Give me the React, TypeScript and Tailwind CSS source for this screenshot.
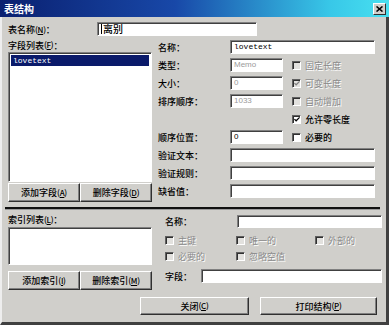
import type { ReactNode } from 'react'

const face = 'bg-[#d0cfcb]'
const dim = 'text-[#8a8a8a] [text-shadow:1px_1px_0_#ffffff]'

function Key({ k }: { k: string }) {
  return (
    <span className="text-[8px] tracking-[-0.3px]">
      (<span className="underline">{k}</span>)
    </span>
  )
}

function Sunken({ className = '', children }: { className?: string; children?: ReactNode }) {
  return (
    <div
      className={`border border-t-[#808080] border-l-[#808080] border-b-white border-r-white shadow-[inset_1px_1px_0_#404040] ${className}`}
    >
      {children}
    </div>
  )
}

function Field({ w, value, grey, mono, cjk }: { w: string; value?: string; grey?: boolean; mono?: boolean; cjk?: boolean }) {
  const font = cjk
    ? 'text-[10px]'
    : mono
      ? "font-['Liberation_Mono',monospace] text-[8px]"
      : "font-['Liberation_Sans',sans-serif] text-[8px]"
  return (
    <Sunken className={`${w} h-full bg-white flex items-center pl-[3px]`}>
      {cjk && <span className="w-px h-[10px] bg-black mr-px" />}
      <span className={`${font} ${grey ? 'text-[#9a9a9a] font-normal' : 'text-black'}`}>{value}</span>
    </Sunken>
  )
}

function Btn({ className = '', children }: { className?: string; children: ReactNode }) {
  return (
    <div
      className={`flex items-center justify-center ${face} border border-t-white border-l-white border-b-[#303030] border-r-[#303030] shadow-[inset_-1px_-1px_0_#808080] ${className}`}
    >
      {children}
    </div>
  )
}

function Check({ label, checked, disabled }: { label: string; checked?: boolean; disabled?: boolean }) {
  return (
    <div className="flex items-center gap-[4px]">
      <span
        className={`w-[9px] h-[9px] flex items-center justify-center border border-t-[#606060] border-l-[#606060] border-b-white border-r-white shadow-[inset_1px_1px_0_#303030] ${disabled ? 'bg-[#e2e1de]' : 'bg-white'}`}
      >
        {checked && (
          <svg width="7" height="7" viewBox="0 0 7 7" className="ml-[1px] mt-[1px]">
            <path d="M0.5 3 L2.5 5 L6.5 1" fill="none" stroke={disabled ? '#808080' : '#000'} strokeWidth="1.4" />
          </svg>
        )}
      </span>
      <span className={disabled ? `${dim} font-normal` : ''}>{label}</span>
    </div>
  )
}

function Row({ label, children }: { label: ReactNode; children: ReactNode }) {
  return (
    <div className="flex items-center h-[14px]">
      <span className="w-[72px] shrink-0">{label}</span>
      {children}
    </div>
  )
}

export default function App() {
  return (
    <div className={`w-[389px] h-[325px] ${face} flex flex-col overflow-hidden font-['Noto_Sans_CJK_SC','Noto_Sans',sans-serif] text-[9px] font-medium leading-none text-black`}>
      {/* title bar */}
      <div className="h-[17px] shrink-0 flex items-center justify-between pl-[4px] pr-[3px] bg-[linear-gradient(90deg,#0a2070_0%,#1848a8_45%,#38c8e8_85%,#48e0f0_100%)]">
        <span className="text-white font-bold text-[10px]">表结构</span>
        <div className="w-[13px] h-[12px] flex items-center justify-center bg-[#d0cfcb] border border-t-white border-l-white border-b-[#303030] border-r-[#303030]">
          <svg width="7" height="6" viewBox="0 0 7 6">
            <path d="M0.5 0.5 L6.5 5.5 M6.5 0.5 L0.5 5.5" stroke="#000" strokeWidth="1.6" />
          </svg>
        </div>
      </div>

      {/* body */}
      <div className="flex-1 flex flex-col pl-[6px] pr-[4px] pt-[5px] border-l-2 border-l-[#eeeeee] border-r-[3px] border-r-[#404040] border-b-[3px] border-b-[#404040]">
        <div className="flex items-center h-[14px]">
          <span className="w-[89px]">
            表名称<Key k="N" />：
          </span>
          <Field w="w-[160px]" value="离别" cjk />
        </div>

        {/* field section */}
        <div className="flex mt-[2px]">
          <div className="w-[144px] flex flex-col">
            <div className="h-[14px] flex items-center">
              字段列表<Key k="F" />：
            </div>
            <Sunken className="h-[130px] bg-white p-[2px]">
              <div className="h-[11px] bg-[#0a1a6a] text-white flex items-center pl-[2px] font-['Liberation_Mono',monospace] text-[8px]">
                lovetext
              </div>
            </Sunken>
            <div className="flex mt-[1px] h-[19px]">
              <Btn className="w-[72px]">
                添加字段<Key k="A" />
              </Btn>
              <Btn className="w-[72px]">
                删除字段<Key k="D" />
              </Btn>
            </div>
          </div>

          <div className="ml-[6px] mt-[2px] flex flex-col gap-[4px]">
            <Row label="名称：">
              <Field w="w-[145px]" value="lovetext" mono />
            </Row>
            <Row label="类型：">
              <Field w="w-[53px]" value="Memo" grey />
              <div className="ml-[9px]">
                <Check label="固定长度" disabled />
              </div>
            </Row>
            <Row label="大小：">
              <Field w="w-[53px]" value="0" grey />
              <div className="ml-[9px]">
                <Check label="可变长度" checked disabled />
              </div>
            </Row>
            <Row label="排序顺序：">
              <Field w="w-[53px]" value="1033" grey />
              <div className="ml-[9px]">
                <Check label="自动增加" disabled />
              </div>
            </Row>
            <Row label="">
              <div className="ml-[62px]">
                <Check label="允许零长度" checked />
              </div>
            </Row>
            <Row label="顺序位置：">
              <Field w="w-[53px]" value="0" />
              <div className="ml-[9px]">
                <Check label="必要的" />
              </div>
            </Row>
            <Row label="验证文本：">
              <Field w="w-[145px]" />
            </Row>
            <Row label="验证规则：">
              <Field w="w-[145px]" />
            </Row>
            <Row label="缺省值：">
              <Field w="w-[145px]" />
            </Row>
          </div>
        </div>

        {/* divider */}
        <div className="mt-[5px] -ml-[3px] mr-[2px] h-[2px] bg-[#101010] shadow-[0_1px_0_#9a9a9a]" />

        {/* index section */}
        <div className="flex mt-[3px]">
          <div className="w-[144px] flex flex-col">
            <div className="h-[15px] flex items-center">
              索引列表<Key k="L" />：
            </div>
            <Sunken className="h-[38px] bg-white" />
            <div className="flex mt-[6px] h-[19px]">
              <Btn className="w-[72px]">
                添加索引<Key k="I" />
              </Btn>
              <Btn className="w-[72px]">
                删除索引<Key k="M" />
              </Btn>
            </div>
          </div>

          <div className="ml-[13px] flex flex-col">
            <div className="flex items-center h-[13px] mt-[3px]">
              <span className="w-[72px]">名称：</span>
              <Field w="w-[145px]" />
            </div>
            <div className="flex items-center h-[12px] mt-[6px]">
              <div className="w-[71px]">
                <Check label="主键" disabled />
              </div>
              <div className="w-[79px]">
                <Check label="唯一的" disabled />
              </div>
              <Check label="外部的" disabled />
            </div>
            <div className="flex items-center h-[12px] mt-[4px]">
              <div className="w-[71px]">
                <Check label="必要的" disabled />
              </div>
              <Check label="忽略空值" disabled />
            </div>
            <div className="flex items-center h-[14px] mt-[7px]">
              <span className="w-[36px]">字段：</span>
              <Field w="w-[181px]" />
            </div>
          </div>
        </div>

        {/* bottom buttons */}
        <div className="flex mt-[7px] h-[18px] ml-[132px]">
          <Btn className="w-[109px]">
            关闭<Key k="C" />
          </Btn>
          <Btn className="w-[117px] ml-[11px]">
            打印结构<Key k="P" />
          </Btn>
        </div>
      </div>
    </div>
  )
}
